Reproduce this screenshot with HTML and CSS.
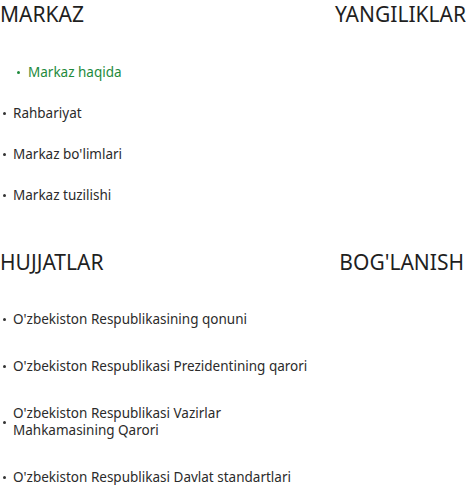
FILE: index.html
```html
<!DOCTYPE html>
<html lang="uz">
<head>
<meta charset="utf-8">
<title>Footer</title>
<link rel="stylesheet" href="styles.css">
</head>
<body>
<section class="block block-first">
  <div class="titles">
    <h2 class="title">MARKAZ</h2>
    <h2 class="title">YANGILIKLAR</h2>
  </div>
  <ul class="links links-tight">
    <li class="link active">Markaz haqida</li>
    <li class="link">Rahbariyat</li>
    <li class="link">Markaz bo'limlari</li>
    <li class="link">Markaz tuzilishi</li>
  </ul>
</section>
<section class="block block-second">
  <div class="titles">
    <h2 class="title">HUJJATLAR</h2>
    <h2 class="title title-end">BOG'LANISH</h2>
  </div>
  <ul class="links links-wide">
    <li class="link">O'zbekiston Respublikasining qonuni</li>
    <li class="link">O'zbekiston Respublikasi Prezidentining qarori</li>
    <li class="link">O'zbekiston Respublikasi Vazirlar Mahkamasining Qarori</li>
    <li class="link">O'zbekiston Respublikasi Davlat standartlari</li>
  </ul>
</section>
</body>
</html>
```
FILE: styles.css
```css
html, body {
  margin: 0;
  padding: 0;
  background: #ffffff;
}
body {
  font-family: "Noto Sans", "Open Sans", sans-serif;
  color: #222222;
}
.block {
  display: flex;
  flex-direction: column;
}
.block-second {
  margin-top: 44px;
}
.titles {
  display: flex;
  justify-content: space-between;
  align-items: center;
}
.title {
  margin: 0;
  font-size: 21px;
  font-weight: 400;
  line-height: 28px;
  color: #1f1f1f;
  letter-spacing: 0;
}
.title-end {
  margin-right: 2px;
}
.links {
  list-style: none;
  margin: 0;
  padding: 0;
  display: flex;
  flex-direction: column;
  max-width: 318px;
}
.links-tight {
  margin-top: 36px;
  gap: 24px;
}
.links-wide {
  margin-top: 35px;
  gap: 30px;
}
.link {
  display: flex;
  align-items: center;
  font-size: 13.5px;
  line-height: 17px;
  color: #2b2b2b;
  padding-left: 3px;
}
.link::before {
  content: "";
  flex: 0 0 auto;
  width: 3px;
  height: 3px;
  border-radius: 50%;
  background: #333333;
  margin-right: 7px;
}
.link.active {
  color: #1e8a3c;
  padding-left: 17px;
}
.link.active::before {
  background: #1e8a3c;
  margin-right: 8px;
}
```
